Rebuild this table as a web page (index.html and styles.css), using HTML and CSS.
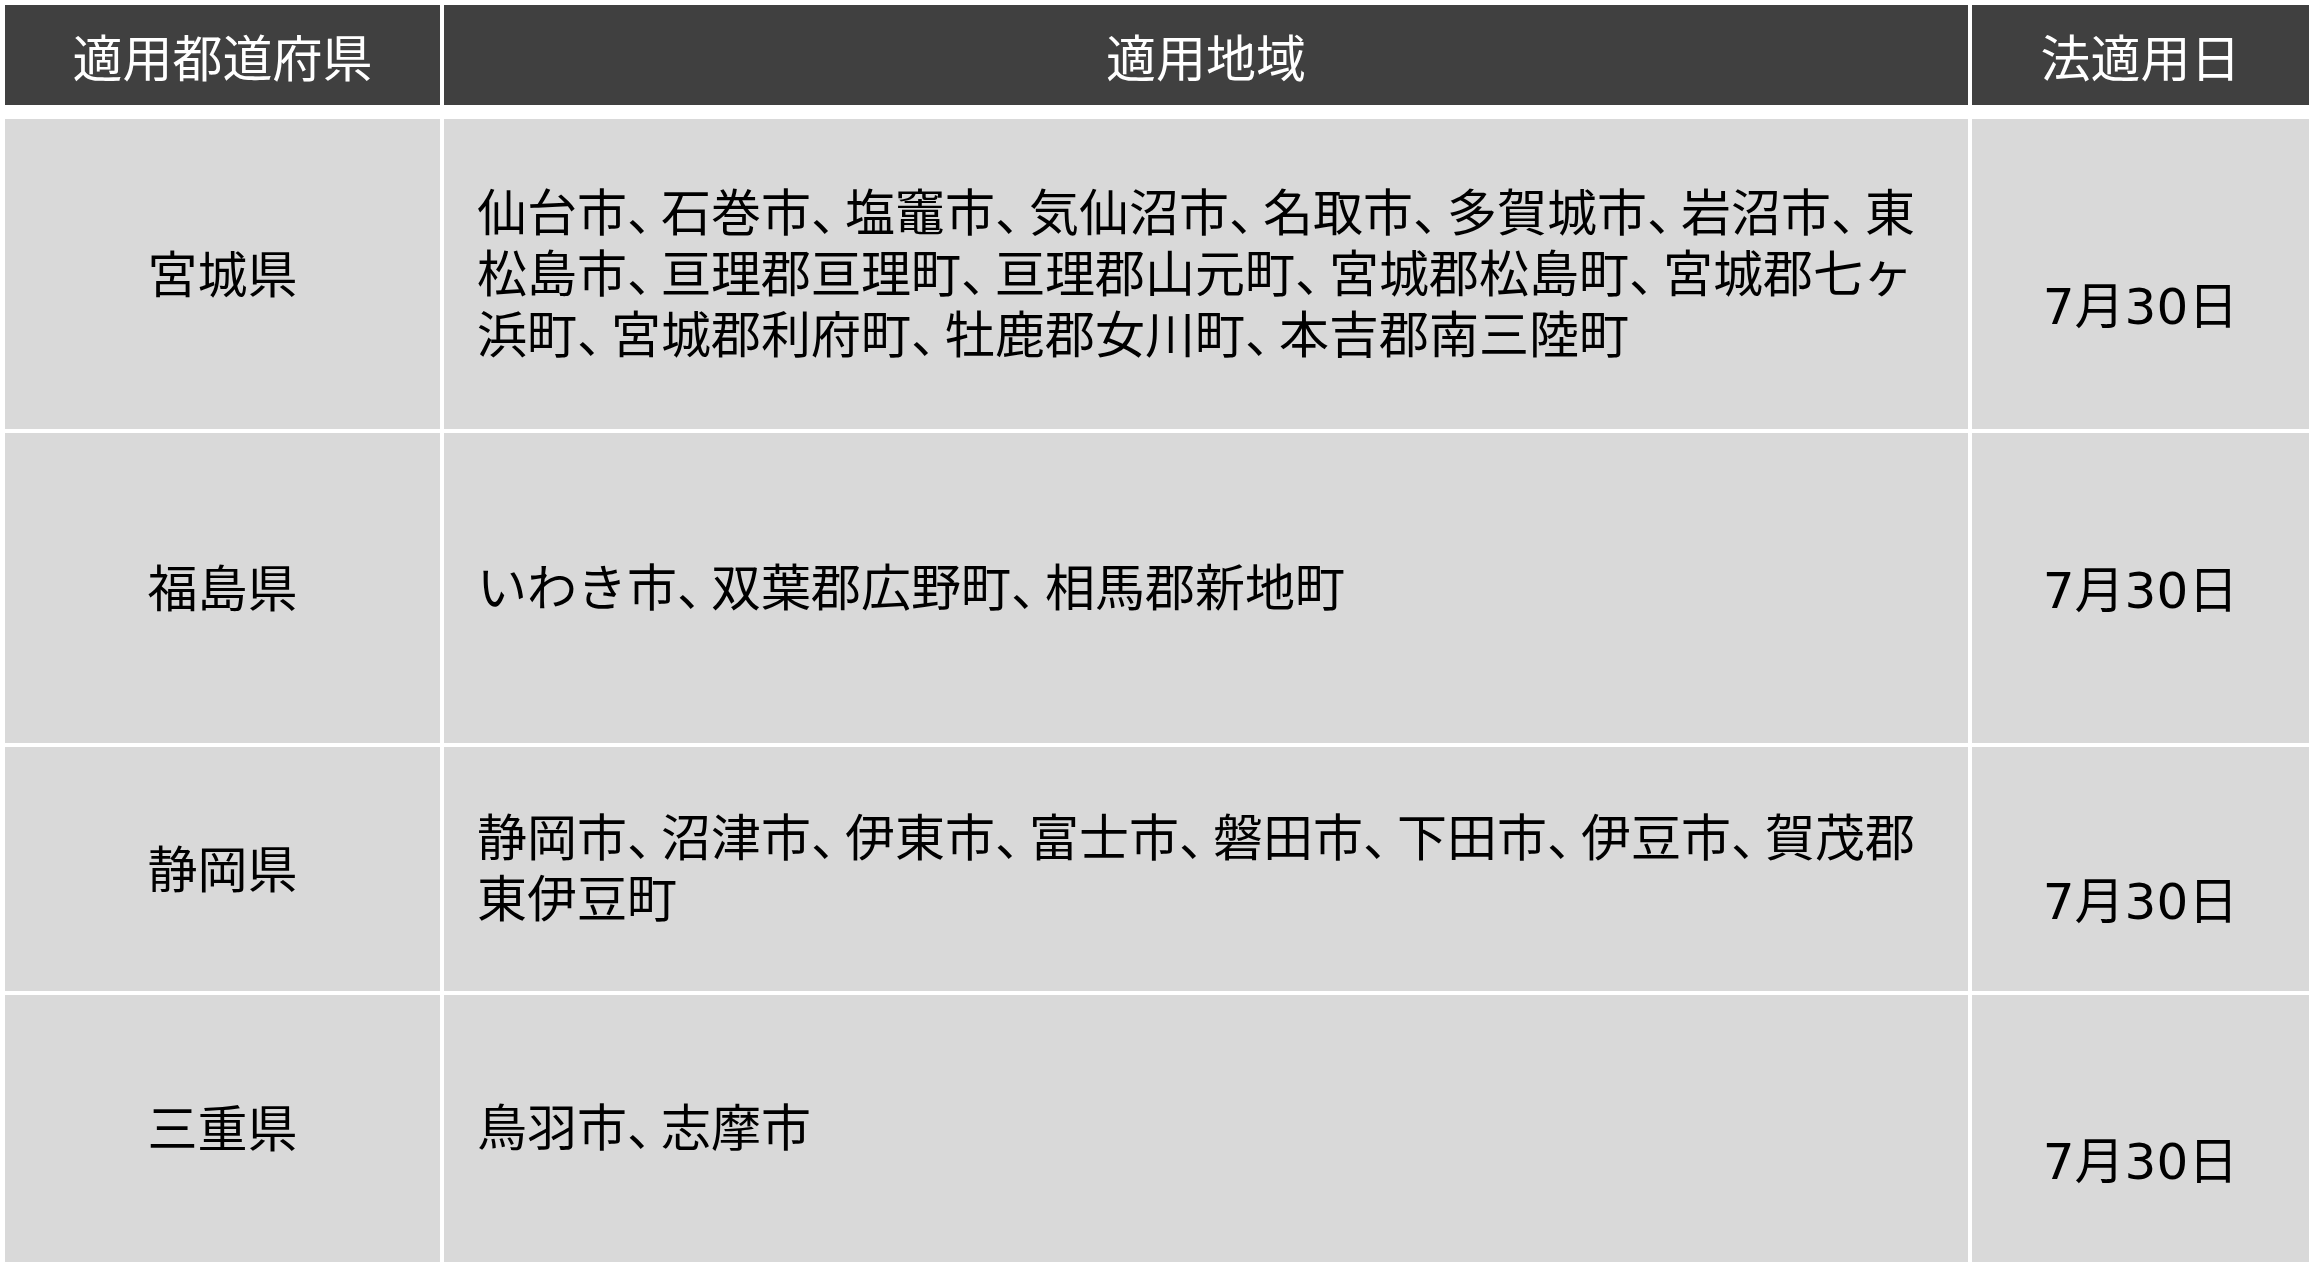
FILE: index.html
```html
<!DOCTYPE html>
<html lang="ja">
<head>
<meta charset="utf-8">
<title>適用地域</title>
<link rel="stylesheet" href="styles.css">
</head>
<body>
<div class="table">
  <div class="cell head">適用都道府県</div>
  <div class="cell head">適用地域</div>
  <div class="cell head">法適用日</div>

  <div class="cell pref">宮城県</div>
  <div class="cell area"><div class="lines">仙台市<span class="p">、</span>石巻市<span class="p">、</span>塩竈市<span class="p">、</span>気仙沼市<span class="p">、</span>名取市<span class="p">、</span>多賀城市<span class="p">、</span>岩沼市<span class="p">、</span>東<br>松島市<span class="p">、</span>亘理郡亘理町<span class="p">、</span>亘理郡山元町<span class="p">、</span>宮城郡松島町<span class="p">、</span>宮城郡七ヶ<br>浜町<span class="p">、</span>宮城郡利府町<span class="p">、</span>牡鹿郡女川町<span class="p">、</span>本吉郡南三陸町</div></div>
  <div class="cell date"><div class="lines"><br>7月30日</div></div>

  <div class="cell pref">福島県</div>
  <div class="cell area"><div class="lines">いわき市<span class="p">、</span>双葉郡広野町<span class="p">、</span>相馬郡新地町</div></div>
  <div class="cell date"><div class="lines">7月30日</div></div>

  <div class="cell pref">静岡県</div>
  <div class="cell area"><div class="lines">静岡市<span class="p">、</span>沼津市<span class="p">、</span>伊東市<span class="p">、</span>富士市<span class="p">、</span>磐田市<span class="p">、</span>下田市<span class="p">、</span>伊豆市<span class="p">、</span>賀茂郡<br>東伊豆町</div></div>
  <div class="cell date"><div class="lines"><br>7月30日</div></div>

  <div class="cell pref">三重県</div>
  <div class="cell area"><div class="lines">鳥羽市<span class="p">、</span>志摩市</div></div>
  <div class="cell date"><div class="lines"><br>7月30日</div></div>
</div>
</body>
</html>
```
FILE: styles.css
```css
html, body {
  margin: 0;
  padding: 0;
  background: #ffffff;
}

body {
  font-family: "Noto Sans CJK JP", "Noto Sans", sans-serif;
  color: #000000;
}

.table {
  margin: 5px 0 0 5px;
  display: grid;
  grid-template-columns: 435px 1524px 337px;
  grid-template-rows: auto 310px 310px 244px 267px;
  column-gap: 4px;
  row-gap: 4px;
  width: 2304px;
}

.cell {
  display: flex;
  align-items: center;
  box-sizing: border-box;
  background: #d9d9d9;
  font-size: 50px;
  line-height: 61px;
  padding-bottom: 6px;
}

.head {
  height: 100px;
  margin-bottom: 10px;
  padding-bottom: 0;
  background: #404040;
  color: #ffffff;
  justify-content: center;
  text-align: center;
}

.pref,
.date {
  justify-content: center;
  text-align: center;
}

.date {
  font-family: "DejaVu Sans", "Noto Sans CJK JP", sans-serif;
  padding-bottom: 0;
  padding-top: 6px;
}

.area {
  padding-left: 33px;
  padding-bottom: 8px;
  text-align: left;
}

.lines {
  white-space: nowrap;
}

.p {
  font-feature-settings: "halt";
  margin-right: 9px;
}
```
